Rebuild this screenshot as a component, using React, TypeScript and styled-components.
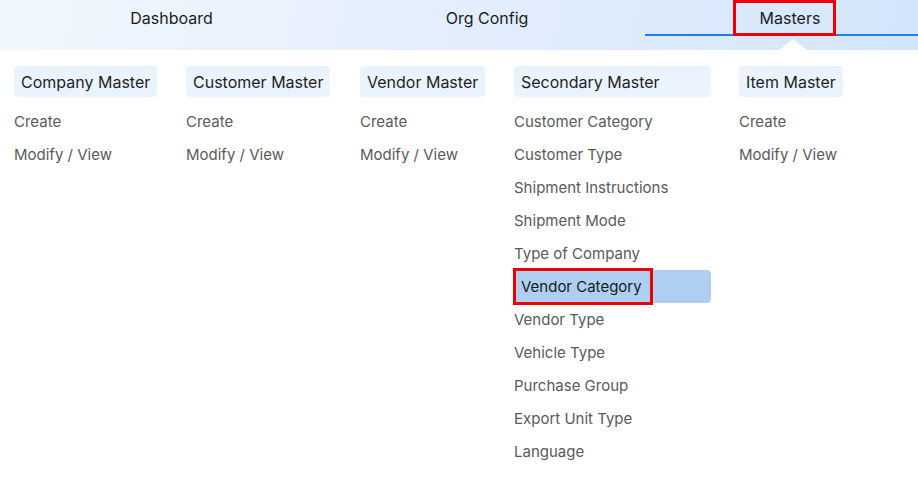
import styled, { createGlobalStyle } from "styled-components";

const GlobalStyle = createGlobalStyle`
  html, body {
    margin: 0;
    padding: 0;
    background: #ffffff;
    overflow: hidden;
  }
  body {
    font-family: Inter, "Noto Sans", sans-serif;
  }
`;

const Page = styled.div`
  width: 918px;
  height: 477px;
  overflow: hidden;
`;

const NavBar = styled.div`
  position: relative;
  height: 50px;
  display: grid;
  grid-template-columns: 343px 302px 293px;
  background: linear-gradient(100deg, #f1f7fe 0%, #e3eefc 50%, #d3e5fb 100%);
`;

const Tab = styled.div<{ active?: boolean; shift?: number }>`
  position: relative;
  height: 36px;
  display: flex;
  align-items: center;
  justify-content: center;
  padding-right: ${(p) => p.shift ?? 0}px;
  font-size: 16px;
  color: #1d1d1f;
  border-bottom: ${(p) => (p.active ? "2px solid #1a7ff2" : "2px solid transparent")};
  box-sizing: border-box;
`;

const TabLabel = styled.span<{ marked?: boolean }>`
  display: inline-flex;
  align-items: center;
  height: 36px;
  box-sizing: border-box;
  margin-top: 2px;
  ${(p) =>
    p.marked
      ? `
    position: relative;
    z-index: 1;
    padding: 0 13px 0 24px;
    border: 3px solid #ee0000;
    background: #d9e8fb;
    margin-left: -14px;
  `
      : ""}
`;

const Notch = styled.div`
  position: absolute;
  left: 779px;
  bottom: 0;
  width: 0;
  height: 0;
  border-left: 14px solid transparent;
  border-right: 14px solid transparent;
  border-bottom: 11px solid #ffffff;
`;

const MenuGrid = styled.div`
  display: grid;
  grid-template-columns: 172px 174px 154px 225px auto;
  padding: 16px 0 0 14px;
  align-items: start;
`;

const Column = styled.div`
  display: flex;
  flex-direction: column;
  align-items: flex-start;
`;

const Heading = styled.div<{ wide?: boolean }>`
  height: 31px;
  display: flex;
  align-items: center;
  padding: 0 7px;
  width: ${(p) => (p.wide ? "197px" : "auto")};
  box-sizing: border-box;
  background: #ebf4fe;
  border-radius: 4px;
  font-size: 16px;
  color: #1f1f1f;
  margin-bottom: 8px;
`;

const Item = styled.div<{ selected?: boolean }>`
  height: 33px;
  display: flex;
  align-items: center;
  box-sizing: border-box;
  font-size: 15px;
  color: ${(p) => (p.selected ? "#1a1a1a" : "#5a5a5a")};
  width: ${(p) => (p.selected ? "197px" : "auto")};
  background: ${(p) => (p.selected ? "#aecff1" : "transparent")};
  border-radius: 4px;
  white-space: nowrap;
`;

const Marked = styled.span`
  display: flex;
  align-items: center;
  height: 37px;
  margin-left: -1px;
  padding: 0 8px 0 5px;
  border: 3px solid #ee0000;
  box-sizing: border-box;
`;

type Group = { title: string; items: string[]; wide?: boolean };

const groups: Group[] = [
  { title: "Company Master", items: ["Create", "Modify / View"] },
  { title: "Customer Master", items: ["Create", "Modify / View"] },
  { title: "Vendor Master", items: ["Create", "Modify / View"] },
  {
    title: "Secondary Master",
    wide: true,
    items: [
      "Customer Category",
      "Customer Type",
      "Shipment Instructions",
      "Shipment Mode",
      "Type of Company",
      "Vendor Category",
      "Vendor Type",
      "Vehicle Type",
      "Purchase Group",
      "Export Unit Type",
      "Language",
      "Payment Method",
    ],
  },
  { title: "Item Master", items: ["Create", "Modify / View"] },
];

export default function App() {
  return (
    <Page>
      <GlobalStyle />
      <NavBar>
        <Tab>
          <TabLabel>Dashboard</TabLabel>
        </Tab>
        <Tab shift={14}>
          <TabLabel>Org Config</TabLabel>
        </Tab>
        <Tab active>
          <TabLabel marked>Masters</TabLabel>
        </Tab>
        <Notch />
      </NavBar>
      <MenuGrid>
        {groups.map((g) => (
          <Column key={g.title}>
            <Heading wide={g.wide}>{g.title}</Heading>
            {g.items.map((it) =>
              it === "Vendor Category" ? (
                <Item key={it} selected>
                  <Marked>{it}</Marked>
                </Item>
              ) : (
                <Item key={it}>{it}</Item>
              )
            )}
          </Column>
        ))}
      </MenuGrid>
    </Page>
  );
}
